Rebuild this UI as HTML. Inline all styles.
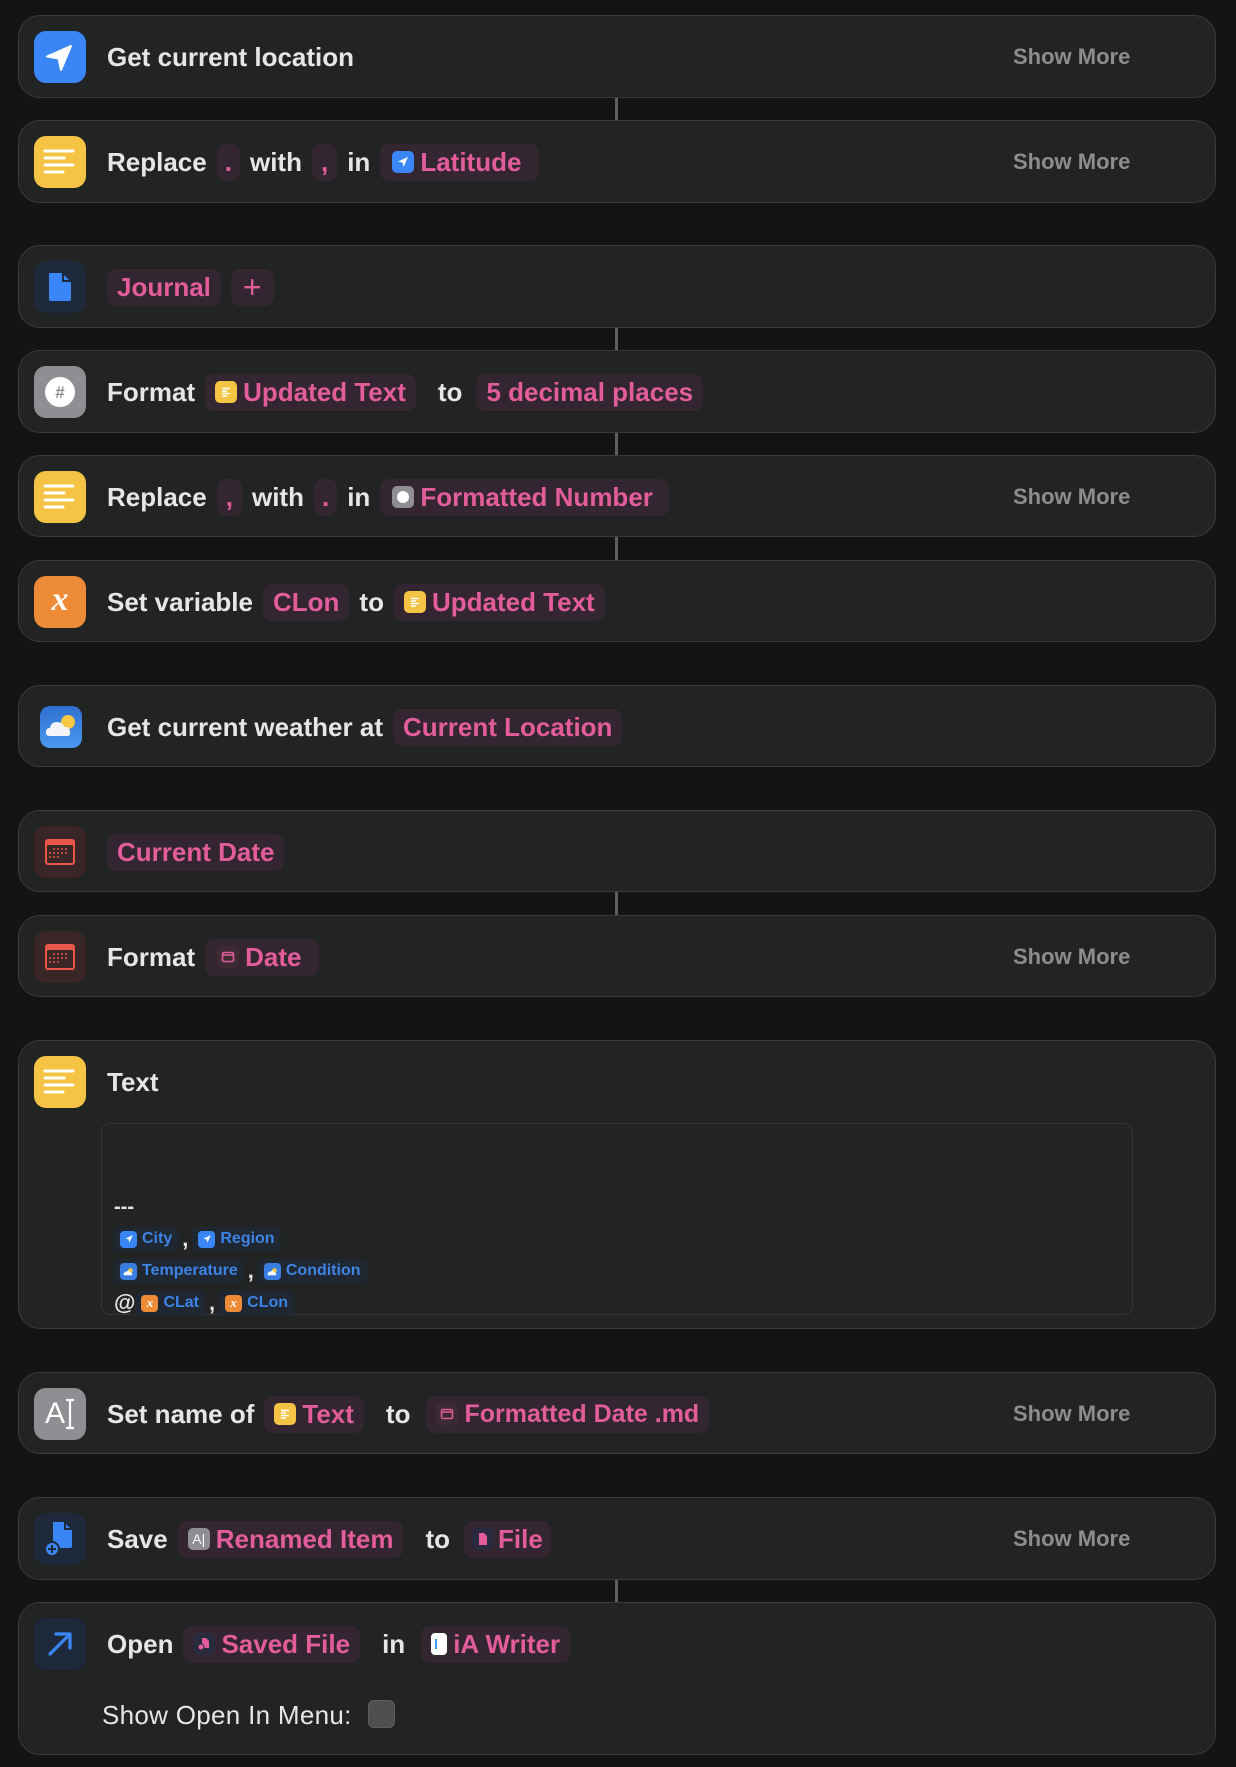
<!DOCTYPE html>
<html><head><meta charset="utf-8">
<style>
*{box-sizing:border-box;margin:0;padding:0}
body{width:1236px;height:1767px;background:#131414;font-family:"Liberation Sans",sans-serif;position:relative;overflow:hidden}
.card{position:absolute;left:18px;width:1198px;background:#222323;border:1.5px solid #3a3b3c;border-radius:22px}
.ic{position:absolute;left:15px;top:15px;width:52px;height:52px;border-radius:12px;display:flex;align-items:center;justify-content:center;overflow:hidden}
.cont{position:absolute;left:88px;top:0;height:82px;display:flex;align-items:center;font-size:26px;font-weight:bold;color:#e6e6e6;white-space:nowrap}
.p{display:inline-flex;align-items:center;height:37px;padding:0 10px;border-radius:9px;background:#332630;color:#e35d9c;margin:0 10px;font-weight:bold}
.p .mi{width:22px;height:22px;border-radius:5px;margin-right:6px;display:inline-flex;align-items:center;justify-content:center}
.sm{position:absolute;left:994px;top:0;height:82px;line-height:82px;font-size:22px;font-weight:bold;color:#8d8d8f}
.con{position:absolute;left:615px;width:3px;background:#5e5f63}
.box{position:absolute;left:82px;top:82px;width:1032px;height:192px;border:1.5px solid #333435;border-radius:9px;background:#222323}
.c{display:inline-flex;align-items:center;height:25px;padding:0 6px;border-radius:6px;background:#1f2733;color:#3d84e6;font-size:16px;font-weight:bold}
.c .mi{width:17px;height:17px;border-radius:4px;margin-right:5px;display:inline-flex;align-items:center;justify-content:center}
.ln{position:absolute;left:12px;display:flex;align-items:center;color:#e6e6e6;font-size:22px;font-weight:bold}
</style></head><body>

<div class="con" style="top:98px;height:22px"></div>
<div class="con" style="top:328px;height:22px"></div>
<div class="con" style="top:433px;height:22px"></div>
<div class="con" style="top:537px;height:23px"></div>
<div class="con" style="top:892px;height:23px"></div>
<div class="con" style="top:1580px;height:22px"></div>

<div class="card" style="top:15px;height:83px">
 <div class="ic" style="background:#3a86f7"><svg width="52" height="52" viewBox="0 0 52 52"><path d="M37 15 L13 25.5 L24.5 27.5 L27 39 Z" fill="#fff" stroke="#fff" stroke-width="2" stroke-linejoin="round"/></svg></div>
 <div class="cont">Get current location</div>
 <div class="sm">Show More</div>
</div>

<div class="card" style="top:120px;height:83px">
 <div class="ic" style="background:#f5c444"><svg width="52" height="52" viewBox="0 0 52 52"><g stroke="#fff" stroke-width="3" stroke-linecap="round"><line x1="11" y1="15" x2="39" y2="15"/><line x1="11" y1="22" x2="30" y2="22"/><line x1="11" y1="29" x2="39" y2="29"/><line x1="11" y1="36" x2="29" y2="36"/></g></svg></div>
 <div class="cont">Replace<span class="p" style="padding:0 8px">.</span>with<span class="p" style="padding:0 9px">,</span>in<span class="p" style="padding:0 18px 0 12px"><span class="mi" style="background:#3a86f7"><svg width="16" height="16" viewBox="0 0 16 16"><path d="M13 3 L3 7.5 L7.5 8.5 L8.5 13 Z" fill="#fff"/></svg></span>Latitude</span></div>
 <div class="sm">Show More</div>
</div>

<div class="card" style="top:245px;height:83px">
 <div class="ic" style="background:#1e2a3b"><svg width="52" height="52" viewBox="0 0 52 52"><path d="M15 12 H28 L37 21 V38 Q37 40 35 40 H17 Q15 40 15 38 Z" fill="#3a86f7"/><path d="M29 12 V20 H37" fill="none" stroke="#1e2a3b" stroke-width="2"/></svg></div>
 <div class="cont" style="left:78px"><span class="p">Journal</span><span class="p" style="margin-left:0;font-size:32px;font-weight:normal;padding:0 12px">+</span></div>
</div>

<div class="card" style="top:350px;height:83px">
 <div class="ic" style="background:#8e8e93"><svg width="52" height="52" viewBox="0 0 52 52"><circle cx="26" cy="26" r="15" fill="#fff"/><text x="26" y="32" font-family="Liberation Sans" font-weight="bold" font-size="17" fill="#8e8e93" text-anchor="middle">#</text></svg></div>
 <div class="cont">Format<span class="p"><span class="mi" style="background:#f5c444"><svg width="14" height="14" viewBox="0 0 14 14"><g stroke="#fff" stroke-width="1.5"><line x1="3" y1="3.5" x2="11" y2="3.5"/><line x1="3" y1="6" x2="8" y2="6"/><line x1="3" y1="8.5" x2="11" y2="8.5"/><line x1="3" y1="11" x2="8" y2="11"/></g></svg></span>Updated Text</span><span style="margin:0 4px 0 12px">to</span><span class="p">5 decimal places</span></div>
</div>

<div class="card" style="top:455px;height:82px">
 <div class="ic" style="background:#f5c444"><svg width="52" height="52" viewBox="0 0 52 52"><g stroke="#fff" stroke-width="3" stroke-linecap="round"><line x1="11" y1="15" x2="39" y2="15"/><line x1="11" y1="22" x2="30" y2="22"/><line x1="11" y1="29" x2="39" y2="29"/><line x1="11" y1="36" x2="29" y2="36"/></g></svg></div>
 <div class="cont">Replace<span class="p" style="padding:0 9px">,</span>with<span class="p" style="padding:0 8px">.</span>in<span class="p" style="padding:0 16px 0 12px"><span class="mi" style="background:#8e8e93"><svg width="16" height="16" viewBox="0 0 16 16"><circle cx="8" cy="8" r="6" fill="#fff"/></svg></span>Formatted Number</span></div>
 <div class="sm">Show More</div>
</div>

<div class="card" style="top:560px;height:82px">
 <div class="ic" style="background:#ee8b36"><span style="color:#fff;font-family:'Liberation Serif',serif;font-style:italic;font-weight:bold;font-size:34px;margin-top:-4px">x</span></div>
 <div class="cont">Set variable<span class="p">CLon</span>to<span class="p"><span class="mi" style="background:#f5c444"><svg width="14" height="14" viewBox="0 0 14 14"><g stroke="#fff" stroke-width="1.5"><line x1="3" y1="3.5" x2="11" y2="3.5"/><line x1="3" y1="6" x2="8" y2="6"/><line x1="3" y1="8.5" x2="11" y2="8.5"/><line x1="3" y1="11" x2="8" y2="11"/></g></svg></span>Updated Text</span></div>
</div>

<div class="card" style="top:685px;height:82px">
 <div class="ic" style="left:21px;top:20px;width:42px;height:42px;border-radius:10px;background:linear-gradient(#2f6fd0,#4a98ef)"><svg width="42" height="42" viewBox="0 0 42 42"><circle cx="28" cy="16" r="7" fill="#f7c844"/><path d="M9 30 Q6 30 6 26 Q6 22 10 22 Q11 16 17 16 Q23 16 24 21 Q29 20 30 25 Q31 30 27 30 Z" fill="#f2f4f8"/></svg></div>
 <div class="cont">Get current weather at<span class="p">Current Location</span></div>
</div>

<div class="card" style="top:810px;height:82px">
 <div class="ic" style="background:#3a2626"><svg width="52" height="52" viewBox="0 0 52 52"><rect x="11" y="13" width="30" height="26" rx="3" fill="#e9574a"/><rect x="13" y="19" width="26" height="18" rx="1" fill="#3a2626"/><g fill="#e9574a"><circle cx="20" cy="23" r="1"/><circle cx="24" cy="23" r="1"/><circle cx="28" cy="23" r="1"/><circle cx="32" cy="23" r="1"/><circle cx="16" cy="27" r="1"/><circle cx="20" cy="27" r="1"/><circle cx="24" cy="27" r="1"/><circle cx="28" cy="27" r="1"/><circle cx="32" cy="27" r="1"/><circle cx="16" cy="31" r="1"/><circle cx="20" cy="31" r="1"/><circle cx="24" cy="31" r="1"/></g></svg></div>
 <div class="cont" style="left:78px"><span class="p">Current Date</span></div>
</div>

<div class="card" style="top:915px;height:82px">
 <div class="ic" style="background:#3a2626"><svg width="52" height="52" viewBox="0 0 52 52"><rect x="11" y="13" width="30" height="26" rx="3" fill="#e9574a"/><rect x="13" y="19" width="26" height="18" rx="1" fill="#3a2626"/><g fill="#e9574a"><circle cx="20" cy="23" r="1"/><circle cx="24" cy="23" r="1"/><circle cx="28" cy="23" r="1"/><circle cx="32" cy="23" r="1"/><circle cx="16" cy="27" r="1"/><circle cx="20" cy="27" r="1"/><circle cx="24" cy="27" r="1"/><circle cx="28" cy="27" r="1"/><circle cx="32" cy="27" r="1"/><circle cx="16" cy="31" r="1"/><circle cx="20" cy="31" r="1"/><circle cx="24" cy="31" r="1"/></g></svg></div>
 <div class="cont">Format<span class="p" style="padding:0 18px 0 12px"><span class="mi" style="background:#3d2a33"><svg width="14" height="14" viewBox="0 0 14 14"><rect x="1.5" y="2.5" width="11" height="9" rx="1.5" fill="none" stroke="#e35d9c" stroke-width="1.5"/><line x1="2" y1="5" x2="12" y2="5" stroke="#e35d9c" stroke-width="1.5"/></svg></span>Date</span></div>
 <div class="sm">Show More</div>
</div>

<div class="card" style="top:1040px;height:289px">
 <div class="ic" style="background:#f5c444"><svg width="52" height="52" viewBox="0 0 52 52"><g stroke="#fff" stroke-width="3" stroke-linecap="round"><line x1="11" y1="15" x2="39" y2="15"/><line x1="11" y1="22" x2="30" y2="22"/><line x1="11" y1="29" x2="39" y2="29"/><line x1="11" y1="36" x2="29" y2="36"/></g></svg></div>
 <div class="cont">Text</div>
 <div class="box">
  <div class="ln" style="top:72px;font-size:20px">---</div>
  <div class="ln" style="top:102px"><span class="c"><span class="mi" style="background:#3a86f7"><svg width="12" height="12" viewBox="0 0 16 16"><path d="M13 3 L3 7.5 L7.5 8.5 L8.5 13 Z" fill="#fff"/></svg></span>City</span><span style="margin:0 4px">,</span><span class="c"><span class="mi" style="background:#3a86f7"><svg width="12" height="12" viewBox="0 0 16 16"><path d="M13 3 L3 7.5 L7.5 8.5 L8.5 13 Z" fill="#fff"/></svg></span>Region</span></div>
  <div class="ln" style="top:134px"><span class="c"><span class="mi" style="background:#3a7fe0"><svg width="13" height="13" viewBox="0 0 14 14"><circle cx="9" cy="6" r="2.5" fill="#f7c844"/><path d="M3 11 Q1 11 2 9 Q3 7 5 7 Q7 5 9 8 Q11 8 11 10 Q11 11 10 11 Z" fill="#fff"/></svg></span>Temperature</span><span style="margin:0 4px">,</span><span class="c"><span class="mi" style="background:#3a7fe0"><svg width="13" height="13" viewBox="0 0 14 14"><circle cx="9" cy="6" r="2.5" fill="#f7c844"/><path d="M3 11 Q1 11 2 9 Q3 7 5 7 Q7 5 9 8 Q11 8 11 10 Q11 11 10 11 Z" fill="#fff"/></svg></span>Condition</span></div>
  <div class="ln" style="top:166px"><span>@</span><span class="c"><span class="mi" style="background:#ee8b36;color:#fff;font-family:'Liberation Serif',serif;font-style:italic;font-size:13px">x</span>CLat</span><span style="margin:0 4px">,</span><span class="c"><span class="mi" style="background:#ee8b36;color:#fff;font-family:'Liberation Serif',serif;font-style:italic;font-size:13px">x</span>CLon</span></div>
 </div>
</div>

<div class="card" style="top:1372px;height:82px">
 <div class="ic" style="background:#8e8e93"><span style="color:#fff;font-size:30px;font-family:'Liberation Sans',sans-serif">A</span><svg width="10" height="32" viewBox="0 0 10 32"><path d="M1 2 H9 M5 2 V30 M1 30 H9" stroke="#fff" stroke-width="2.2" fill="none"/></svg></div>
 <div class="cont">Set name of<span class="p"><span class="mi" style="background:#f5c444"><svg width="14" height="14" viewBox="0 0 14 14"><g stroke="#fff" stroke-width="1.5"><line x1="3" y1="3.5" x2="11" y2="3.5"/><line x1="3" y1="6" x2="8" y2="6"/><line x1="3" y1="8.5" x2="11" y2="8.5"/><line x1="3" y1="11" x2="8" y2="11"/></g></svg></span>Text</span><span style="margin:0 6px 0 12px">to</span><span class="p" style="font-size:25px"><span class="mi" style="background:#3d2a33"><svg width="14" height="14" viewBox="0 0 14 14"><rect x="1.5" y="2.5" width="11" height="9" rx="1.5" fill="none" stroke="#e35d9c" stroke-width="1.5"/><line x1="2" y1="5" x2="12" y2="5" stroke="#e35d9c" stroke-width="1.5"/></svg></span>Formatted Date&nbsp;.md</span></div>
 <div class="sm">Show More</div>
</div>

<div class="card" style="top:1497px;height:83px">
 <div class="ic" style="background:#1e2a3b"><svg width="52" height="52" viewBox="0 0 52 52"><path d="M19 9 H30 L38 17 V33 Q38 35 36 35 H19 Z" fill="#3a86f7"/><path d="M31 9 V16 H38" fill="none" stroke="#1e2a3b" stroke-width="2"/><circle cx="18" cy="36" r="7" fill="#3a86f7" stroke="#1e2a3b" stroke-width="2"/><path d="M18 32 V40 M14 36 H22" stroke="#1e2a3b" stroke-width="2"/></svg></div>
 <div class="cont">Save<span class="p"><span class="mi" style="background:#8e8e93;color:#fff;font-size:14px;font-weight:normal">A|</span>Renamed Item</span><span style="margin:0 4px 0 12px">to</span><span class="p" style="padding:0 8px"><span class="mi" style="background:#2a2a3e;margin-right:4px"><svg width="12" height="14" viewBox="0 0 12 14"><path d="M2 1 H7 L10 4 V13 H2 Z" fill="#e35d9c"/></svg></span>File</span></div>
 <div class="sm">Show More</div>
</div>

<div class="card" style="top:1602px;height:153px">
 <div class="ic" style="background:#1e2a3b"><svg width="52" height="52" viewBox="0 0 52 52"><path d="M16 36 L35 17 M22 16 H36 V30" stroke="#3a86f7" stroke-width="3.2" fill="none" stroke-linecap="round" stroke-linejoin="round"/></svg></div>
 <div class="cont">Open<span class="p"><span class="mi" style="background:#2a2a3e"><svg width="14" height="14" viewBox="0 0 14 14"><path d="M5 1 H9 L12 4 V11 H5 Z" fill="#e35d9c"/><circle cx="4" cy="10" r="3" fill="#e35d9c" stroke="#2a2a3e"/></svg></span>Saved File</span><span style="margin:0 6px 0 12px">in</span><span class="p"><span class="mi" style="background:#fff;width:16px;border-radius:4px"><span style="width:2px;height:10px;background:#3a9af0;margin-left:-6px"></span></span>iA Writer</span></div>
 <div style="position:absolute;left:83px;top:96px;height:32px;line-height:32px;font-size:26px;color:#e6e6e6;letter-spacing:0.3px">Show Open In Menu:</div>
 <div style="position:absolute;left:349px;top:97px;width:27px;height:28px;border-radius:6px;background:#4e4f51;border:1px solid #5c5d60"></div>
</div>

</body></html>
